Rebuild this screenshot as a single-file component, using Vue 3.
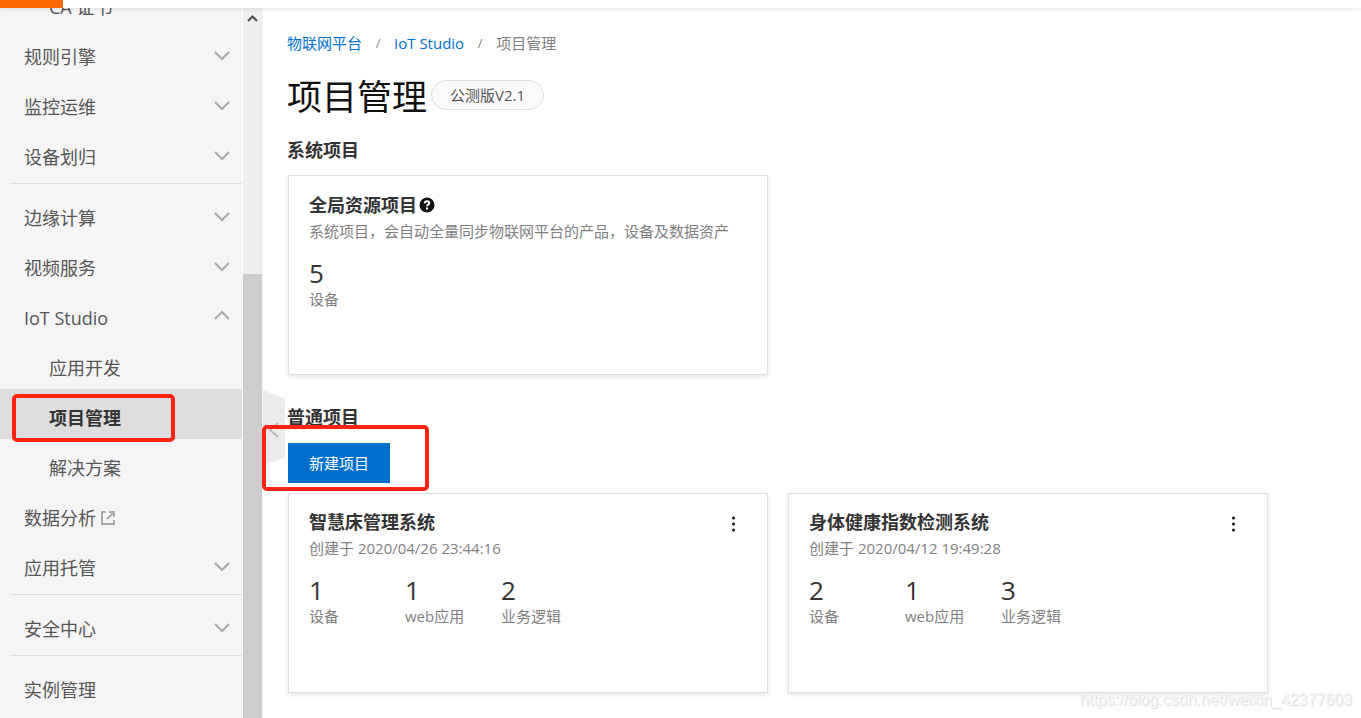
<script setup>
const nav = [
  { label: 'CA 证书', sub: true },
  { label: '规则引擎', arrow: 'down' },
  { label: '监控运维', arrow: 'down' },
  { label: '设备划归', arrow: 'down', divider: true },
  { label: '边缘计算', arrow: 'down' },
  { label: '视频服务', arrow: 'down' },
  { label: 'IoT Studio', arrow: 'up' },
  { label: '应用开发', sub: true },
  { label: '项目管理', sub: true, active: true },
  { label: '解决方案', sub: true },
  { label: '数据分析', external: true },
  { label: '应用托管', arrow: 'down', divider: true },
  { label: '安全中心', arrow: 'down', divider: true },
  { label: '实例管理' }
]

const projects = [
  {
    name: '智慧床管理系统',
    created: '创建于 2020/04/26 23:44:16',
    stats: [['1', '设备'], ['1', 'web应用'], ['2', '业务逻辑']]
  },
  {
    name: '身体健康指数检测系统',
    created: '创建于 2020/04/12 19:49:28',
    stats: [['2', '设备'], ['1', 'web应用'], ['3', '业务逻辑']]
  }
]
</script>

<template>
  <div class="page">
    <header class="topbar"><span class="brand"></span></header>
    <div class="body">
      <nav class="sidebar" aria-label="产品导航">
        <ul class="menu">
          <li v-for="item in nav" :key="item.label" :class="{ divider: item.divider }">
            <a href="#" class="item" :class="{ sub: item.sub, active: item.active }">
              <span>{{ item.label }}</span>
              <svg v-if="item.external" class="external" width="14" height="14" viewBox="0 0 14 14">
                <path d="M5 1H1V13H13V9M8 1H13V6M13 1L6 8" />
              </svg>
              <svg v-if="item.arrow" class="arrow" width="16" height="10" viewBox="0 0 16 10">
                <path :d="item.arrow === 'down' ? 'M1 0L8 7L15 0' : 'M1 6L8 -1L15 6'" />
              </svg>
            </a>
            <span v-if="item.active" class="mark mark-nav"></span>
          </li>
        </ul>
      </nav>
      <div class="scrollbar" aria-hidden="true">
        <svg class="scroll-up" width="11" height="8" viewBox="0 0 11 8">
          <path d="M1 7L5.500 2.500L10 7" />
        </svg>
        <span class="thumb"></span>
      </div>
      <main class="main">
        <button class="collapse" type="button" aria-label="收起导航">
          <svg width="22" height="76" viewBox="0 0 22 76">
            <polygon points="0,0 22,9 22,67 0,76" />
            <path d="M15 33L7 40L15 47" />
          </svg>
        </button>
        <div class="crumbs">
          <a href="#">物联网平台</a><i>/</i><a href="#">IoT Studio</a><i>/</i><span>项目管理</span>
        </div>
        <div class="heading">
          <h1>项目管理</h1>
          <span class="badge">公测版V2.1</span>
        </div>

        <h2>系统项目</h2>
        <div class="cards first">
          <article class="card">
            <div class="card-head">
              <h3>全局资源项目</h3>
              <svg class="help" width="16" height="16" viewBox="0 0 16 16">
                <circle cx="8" cy="8" r="7.500" />
                <path d="M5.800 6.300C5.800 3.400 10.200 3.500 10.200 6.100C10.200 7.700 8 7.700 8 9.300" />
                <rect x="7" y="10.500" width="2" height="2" />
              </svg>
            </div>
            <p class="desc">系统项目，会自动全量同步物联网平台的产品，设备及数据资产</p>
            <dl class="stats">
              <div><dd>5</dd><dt>设备</dt></div>
            </dl>
          </article>
        </div>

        <h2 class="normal">普通项目</h2>
        <div class="actions">
          <button class="create" type="button">新建项目</button>
          <span class="mark mark-create"></span>
        </div>
        <div class="cards">
          <article v-for="p in projects" :key="p.name" class="card">
            <div class="card-head">
              <h3>{{ p.name }}</h3>
              <button class="more" type="button" aria-label="更多操作">
                <svg width="4" height="16" viewBox="0 0 4 16">
                  <circle cx="2.500" cy="2" r="1.500" />
                  <circle cx="2.500" cy="8" r="1.500" />
                  <circle cx="2.500" cy="14" r="1.500" />
                </svg>
              </button>
            </div>
            <p class="desc">{{ p.created }}</p>
            <dl class="stats">
              <div v-for="s in p.stats" :key="s[1]"><dd>{{ s[0] }}</dd><dt>{{ s[1] }}</dt></div>
            </dl>
          </article>
        </div>
      </main>
    </div>
    <span class="watermark">https://blog.csdn.net/weixin_42377603</span>
  </div>
</template>

<style>
body {
  margin: 0;
  background: #fff;
}
</style>

<style scoped>
.page {
  position: relative;
  display: flex;
  flex-direction: column;
  height: 100vh;
  overflow: hidden;
  font: 15px/20px "Open Sans", "Noto Sans CJK SC", sans-serif;
  color: #333;
}
.topbar {
  position: relative;
  z-index: 3;
  flex: none;
  height: 8px;
  background: #fff;
  box-shadow: 0 1px 4px rgba(0, 0, 0, 0.1);
}
.brand {
  display: block;
  width: 63px;
  height: 8px;
  background: #ff6a00;
}
.body {
  display: flex;
  flex: 1;
  min-height: 0;
}
a {
  color: #0070cc;
  text-decoration: none;
}
button {
  padding: 0;
  border: 0;
  background: none;
  font: inherit;
}
svg {
  display: block;
  fill: none;
}

.sidebar {
  flex: none;
  width: 242px;
  overflow: hidden;
  background: #f5f5f5;
}
.menu {
  margin: -30px 0 0;
  padding: 0;
  list-style: none;
}
.menu li {
  position: relative;
}
.divider::after {
  content: "";
  display: block;
  height: 1px;
  margin: 5px 0 5px 10px;
  background: #dcdcdc;
}
.item {
  display: flex;
  align-items: center;
  box-sizing: border-box;
  height: 50px;
  padding: 7px 12px 0 24px;
  font-size: 18px;
  color: #555;
}
.sub {
  padding-left: 49px;
}
.active {
  background: #dedede;
  color: #333;
  font-weight: bold;
}
.arrow {
  margin-left: auto;
  stroke: #a8a8a8;
  stroke-width: 2;
  overflow: visible;
}
.external {
  margin-left: 5px;
  stroke: #aaa;
  stroke-width: 2;
}
.mark {
  position: absolute;
  box-sizing: border-box;
  border: 4px solid #ff2314;
  border-radius: 5px;
  pointer-events: none;
}
.mark-nav {
  left: 12px;
  top: 5px;
  width: 163px;
  height: 48px;
  z-index: 2;
}

.scrollbar {
  flex: none;
  display: flex;
  flex-direction: column;
  width: 19px;
  margin-left: 1px;
  border-right: 1px solid #f3f3f3;
  background: #efefef;
}
.scroll-up {
  margin: 6px 4px 0;
  stroke: #505050;
  stroke-width: 2;
}
.thumb {
  flex: 1;
  margin-top: 252px;
  background: #cdcdcd;
}

.main {
  position: relative;
  flex: 1;
  min-width: 0;
  padding: 25px 25px 0 24px;
}
.collapse {
  position: absolute;
  left: 0;
  top: 382px;
}
.collapse polygon {
  fill: #ebebeb;
}
.collapse path {
  stroke: #bbb;
  stroke-width: 2;
}
.crumbs {
  display: flex;
  color: #808080;
}
.crumbs i {
  width: 32px;
  font-size: 13px;
  font-style: normal;
  text-align: center;
  color: #888;
}
.heading {
  display: flex;
  align-items: flex-start;
  gap: 4px;
  margin-top: 19px;
}
h1 {
  margin: 0;
  font-size: 35px;
  line-height: 50px;
  font-weight: normal;
  color: #111;
}
.badge {
  margin-top: 8px;
  padding: 4px 18px;
  border: 1px solid #dedede;
  border-radius: 15px;
  background: #fafafa;
  color: #555;
}
h2 {
  position: relative;
  margin: 16px 0 0;
  font-size: 18px;
  line-height: 24px;
}
.normal {
  margin-top: 30px;
}
.cards {
  display: flex;
  flex-wrap: wrap;
  gap: 20px;
  margin: 10px 0 0 1px;
}
.first {
  margin-top: 13px;
}
.card {
  box-sizing: border-box;
  width: 480px;
  min-height: 200px;
  padding: 16px 20px;
  border: 1px solid #dedede;
  background: #fff;
  box-shadow: 0 2px 5px rgba(0, 0, 0, 0.1);
}
.first .card {
  padding-top: 17px;
}
.card-head {
  display: flex;
  align-items: center;
}
h3 {
  margin: 0;
  font-size: 18px;
  line-height: 24px;
}
.help {
  margin-left: 2px;
}
.help circle,
.more circle {
  fill: #111;
}
.help path {
  stroke: #fff;
  stroke-width: 2;
}
.help rect {
  fill: #fff;
}
.more {
  margin-left: auto;
  padding: 4px 12px 0;
}
.desc {
  margin: 3px 0 0;
  line-height: 22px;
  color: #808080;
}
.stats {
  display: flex;
  margin: 15px 0 0;
}
.stats div {
  width: 96px;
}
.stats dd {
  margin: 0;
  font-size: 26px;
  line-height: 32px;
}
.stats dt {
  color: #808080;
}
.actions {
  position: relative;
  display: flex;
  margin: 14px 0 0 1px;
}
.create {
  height: 40px;
  padding: 0 21px;
  background: #0070cc;
  color: #fff;
}
.mark-create {
  left: -26px;
  top: -18px;
  width: 167px;
  height: 66px;
}
.watermark {
  position: absolute;
  right: 9px;
  bottom: 8px;
  font: 16px/20px "Liberation Sans", Arial, sans-serif;
  color: #f6f6f6;
  text-shadow: 1px 1px 1px #d8d8d8;
}
</style>
